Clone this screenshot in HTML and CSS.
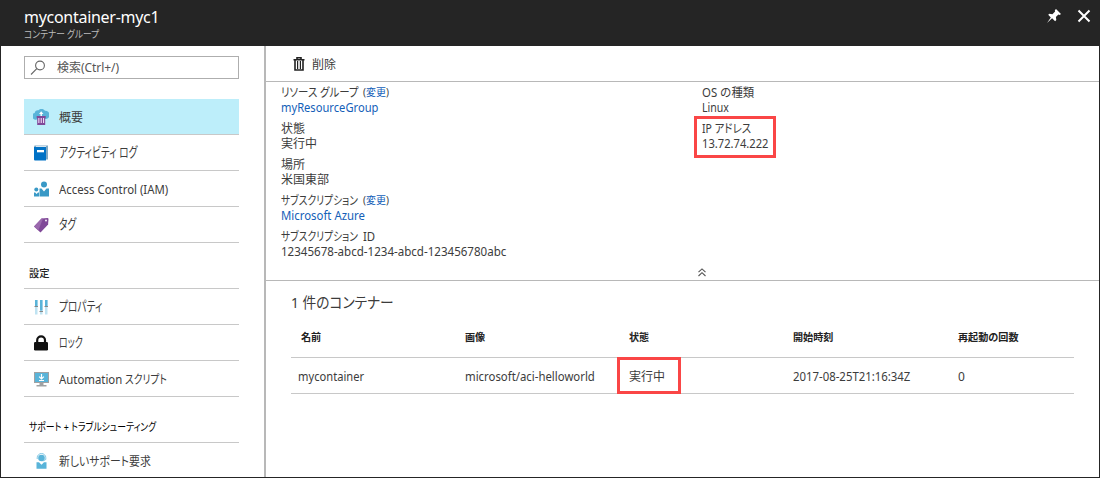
FILE: index.html
```html
<!DOCTYPE html>
<html lang="ja">
<head>
<meta charset="utf-8">
<title>mycontainer-myc1</title>
<link rel="stylesheet" href="styles.css">
</head>
<body>
<div class="blade">
  <header class="header">
    <div class="heading">
      <h1 class="title">mycontainer-myc1</h1>
      <div class="subtitle"><span class="kana-mid">コンテナー グループ</span></div>
    </div>
    <div class="actions">
      <svg class="pin" width="16" height="16" viewBox="0 0 16 16"><path fill="#fff" d="M10 1l5 5-1.400 1-1.200-.4-2.500 2.500.4 3-1.200 1.200-3-3L1 15l3.800-5.500-2.600-2.700 1.200-1 3 .4L9.100 3.600 8.800 2.200z"/></svg>
      <svg class="close" width="14" height="14" viewBox="0 0 14 14"><path stroke="#fff" stroke-width="2" d="M1.500 1.500l11 11M12.500 1.500l-11 11"/></svg>
    </div>
  </header>
  <div class="body">
    <nav class="menu">
      <div class="search">
        <svg width="16" height="16" viewBox="0 0 16 16" fill="none" stroke="#666" stroke-width="1.100"><circle cx="10" cy="5.500" r="4.400"/><path d="M6.800 8.700L1 14.500"/></svg>
        <span class="search-text">検索(Ctrl+/)</span>
      </div>
      <ul class="list list-first">
        <li class="item active">
          <svg width="16" height="16" viewBox="0 0 16 16"><path fill="#59b4d9" d="M3.500 10.500A3.300 3.300 0 0 1 1.700 4 3 3 0 0 1 5.500 1.300 4 4 0 0 1 12 1.800a3.500 3.500 0 0 1 1 8.200z"/><path fill="#fff" d="M7.500 7V5H6l2.200-2.800L10.400 5H8.900v2z"/><path fill="#804998" d="M3.700 7h9v2h-.5v7H4.200V9h-.5z"/><path fill="#f0d9f5" d="M5.300 9h1.100v5H5.300zM7.700 9h1.100v5H7.700zM10 9h1.100v5H10z"/></svg>
          <span>概要</span>
        </li>
        <li class="item">
          <svg width="16" height="16" viewBox="0 0 16 16"><path fill="#7fa8c4" d="M1.500.5H15v14h-2V2H1z"/><path fill="#fff" d="M3 1.300h10V2H3z"/><path fill="#0072c6" d="M1 2h12v13.500H2A1 1 0 0 1 1 14.500z"/><path fill="#fff" d="M4 5h7v2.300H4z"/></svg>
          <span class="kana">アクティビティ ログ</span>
        </li>
        <li class="item">
          <svg width="16" height="16" viewBox="0 0 16 16" fill="#3999c6"><circle cx="11" cy="3.500" r="3"/><circle cx="3.300" cy="8.500" r="2"/><path d="M6.500 7.500h2l2.500 3 2.500-3H16V15.500H6.500zM1 11.500h1.200l1.300 1.500L5 11.500h1v4H1z"/></svg>
          <span class="latin">Access Control (IAM)</span>
        </li>
        <li class="item">
          <svg width="16" height="16" viewBox="0 0 16 16"><path fill="#804998" d="M1 9.500L8.500 1.500 14.500 1q1 0 1 1l-.4 5.500L7.500 15.500z"/><path fill="#9a68ad" d="M1 9.500L8.500 1.500 10 1.400 5.300 13.400z"/><circle cx="13" cy="3.500" r=".9" fill="#fff"/></svg>
          <span class="kana">タグ</span>
        </li>
      </ul>
      <h2 class="section">設定</h2>
      <ul class="list">
        <li class="item">
          <svg width="16" height="16" viewBox="0 0 16 16"><path fill="#bfe3f2" d="M2 1h2.500v14.500H2zM7 1h2.500v14.500H7zM12 1h2.500v14.500H12z"/><path fill="#59b4d9" d="M2 1h2.500v6H2zM7 1h2.500v10.500H7zM12 1h2.500v6H12z"/><path fill="#888" d="M1.500 7h3.500v1H1.500zM6.500 12h3.500v1H6.500zM11.500 7h3.500v1h-3.500z"/></svg>
          <span class="kana">プロパティ</span>
        </li>
        <li class="item">
          <svg width="16" height="16" viewBox="0 0 16 16"><path fill="none" stroke="#111" stroke-width="2.200" d="M4.200 8V5.200a3.900 3.900 0 0 1 7.800 0V8"/><rect x="1" y="7" width="14" height="8.500" rx="1.200" fill="#111"/></svg>
          <span class="kana-tight">ロック</span>
        </li>
        <li class="item">
          <svg width="16" height="16" viewBox="0 0 16 16"><path fill="#a0a1a2" d="M1 1h15v11H1zM6.500 12h4v2h-4zM3.500 14h10v1.500h-10z"/><path fill="#59b4d9" d="M2 2h13v9H2z"/><path stroke="#fff" stroke-width="1.200" fill="none" d="M8.500 3v5M6.100 5.600l2.400 2.300 2.400-2.300M6 9.500h5"/></svg>
          <span class="automation"><span class="latin">Automation</span><span class="kana">スクリプト</span></span>
        </li>
      </ul>
      <h2 class="section section-support"><span>サポート + トラブルシューティング</span></h2>
      <ul class="list">
        <li class="item item-last">
          <svg width="16" height="16" viewBox="0 0 16 16"><circle cx="8.500" cy="5" r="3.300" fill="#59b4d9"/><path fill="none" stroke="#7fc6e3" d="M4.200 6V4.800a4.300 4.300 0 0 1 8.600 0V6.500L9.800 8"/><path fill="#59b4d9" d="M3.500 9.300H6l2.500 2.500L11 9.300h2.500V15.800h-10z"/></svg>
          <span class="kana-wide">新しいサポート要求</span>
        </li>
      </ul>
    </nav>
    <main class="main">
      <div class="toolbar">
        <svg width="12" height="14" viewBox="0 0 12 14"><path fill="none" stroke="#222" stroke-width="1.600" d="M4 2V.8h4V2M.5 2.700h11M2 3.500v9.500h8V3.500"/><path stroke="#222" stroke-width="1.200" d="M4.600 4v8M7.400 4v8"/></svg>
        <span>削除</span>
      </div>
      <section class="essentials">
        <dl class="props">
          <div class="prop"><dt class="pair"><span class="kana-mid">リソース グループ</span><span class="change">(<a>変更</a>)</span></dt><dd><a class="latin-tight">myResourceGroup</a></dd></div>
          <div class="prop"><dt>状態</dt><dd>実行中</dd></div>
          <div class="prop"><dt>場所</dt><dd>米国東部</dd></div>
          <div class="prop"><dt class="pair"><span class="kana">サブスクリプション</span><span class="change">(<a>変更</a>)</span></dt><dd><a class="latin">Microsoft Azure</a></dd></div>
          <div class="prop"><dt class="pair"><span class="kana">サブスクリプション</span><span class="latin">ID</span></dt><dd><span class="guid">12345678-abcd-1234-abcd-123456780abc</span></dd></div>
        </dl>
        <dl class="props">
          <div class="prop"><dt><span class="latin">OS の種類</span></dt><dd><span class="linux">Linux</span></dd></div>
          <div class="prop marked"><dt><span class="kana-mid">IP アドレス</span></dt><dd><span class="latin-tight">13.72.74.222</span></dd></div>
        </dl>
        <svg class="collapse" width="8" height="9" viewBox="0 0 8 9" fill="none" stroke="#555" stroke-width="1.100"><path d="M.5 4.200L4 .9l3.500 3.300M.5 8L4 4.700 7.500 8"/></svg>
      </section>
      <section class="containers">
        <h2 class="count"><span>1 件のコンテナー</span></h2>
        <div class="row head"><span class="name">名前</span><span>画像</span><span>状態</span><span>開始時刻</span><span>再起動の回数</span></div>
        <div class="row"><span class="latin-tight">mycontainer</span><span class="latin">microsoft/aci-helloworld</span><span class="state">実行中</span><span class="latin">2017-08-25T21:16:34Z</span><span>0</span></div>
      </section>
    </main>
  </div>
</div>
</body>
</html>
```

FILE: styles.css
```css
* { box-sizing: border-box; }
body, h1, h2, ul, dl, dd { margin: 0; padding: 0; }
body {
  font: 12px/15px "Noto Sans", "Noto Sans CJK JP", sans-serif;
  color: #3c3c3c;
  white-space: nowrap;
}
.blade {
  display: flex;
  flex-direction: column;
  width: 1100px;
  height: 478px;
  overflow: hidden;
  background: #fff;
  border: solid #252525;
  border-width: 0 1px 1px;
}

/* Condensed text runs */
.kana, .kana-mid, .kana-tight, .kana-wide, .latin, .latin-tight, .guid, .linux,
.section-support span, .count span {
  display: inline-block;
  transform-origin: 0 50%;
}
.kana, .kana-mid, .kana-tight, .kana-wide { font-feature-settings: "palt"; }
.kana { transform: scaleX(.81); }
.kana-mid { transform: scaleX(.87); }
.kana-tight { transform: scale(.75, 1.1); }
.kana-wide { transform: scaleX(.905); }
.latin { transform: scaleX(.948); }
.latin-tight { transform: scaleX(.93); }
.guid { transform: scaleX(.963); }
.linux { transform: scaleX(.88); }

.header {
  display: flex;
  justify-content: space-between;
  flex: none;
  height: 46px;
  padding: 6px 8px 0 23px;
  background: #252525;
}
.title { font-size: 16px; line-height: 22px; font-weight: 400; color: #fff; letter-spacing: -0.28px; }
.subtitle { font-size: 10px; line-height: 12px; color: #bbb; }
.actions { display: flex; gap: 15px; padding-top: 2px; }
.close { margin-top: 1px; }
.body { display: flex; flex: 1; min-height: 0; }
.menu { flex: none; width: 265px; padding: 10px 26px 0 23px; border-right: 2px solid #b8b8b8; }
.search {
  display: flex;
  align-items: center;
  gap: 11px;
  width: 215px;
  height: 23px;
  padding-left: 5px;
  border: 1px solid #aeaeae;
}
.search-text { color: #555; letter-spacing: -0.05px; }
.list { list-style: none; width: 215px; border-top: 1px solid #c8c8c8; }
.list-first { margin-top: 20px; border-top: 0; }
.item {
  display: flex;
  align-items: center;
  gap: 10px;
  height: 36px;
  padding-left: 9px;
  border-bottom: 1px solid #c8c8c8;
}
.item > span { padding-top: 2px; }
.item > .kana { transform: scale(.81, 1.1); }
.item > .kana, .item > .kana-tight { padding-top: 0; }
.item-last { border: 0; }
.item-last > span { padding-top: 0; }
.active { background: #bdeefa; }
.automation { display: grid; grid-template-columns: 66px auto; }
.section { height: 45px; padding: 23px 0 0 5px; font-size: 10.3px; line-height: 15px; font-weight: 500; color: #222; }
.section-support { font-weight: 400; color: #000; }
.section-support span { font-feature-settings: "palt"; transform: scale(.86, 1.06); }
.main { flex: 1; min-width: 0; display: flex; flex-direction: column; }
.toolbar { display: flex; align-items: center; gap: 7px; height: 36px; padding-left: 27px; border-bottom: 1px solid #b8b8b8; }
.toolbar span { padding-top: 2px; }
.essentials {
  position: relative;
  display: grid;
  grid-template-columns: 421px 1fr;
  height: 199px;
  padding: 3px 0 0 15px;
  border-bottom: 1px solid #b8b8b8;
}
.prop { margin-bottom: 6px; }
.prop dt, .prop dd { height: 15px; }
.prop a { color: #1460b8; }
.pair { display: grid; grid-template-columns: 82px auto; }
.change { font-size: 10px; }
.marked { width: 82px; height: 42px; margin: -5px 0 0 -8px; padding: 2px 0 0 5px; border: 3px solid #fa4646; }
.collapse { position: absolute; left: 432px; bottom: 3px; }
.containers { padding: 11px 25px 0; }
.count { height: 21px; font-size: 15px; line-height: 20px; font-weight: 400; font-feature-settings: "palt"; }
.count span { transform: scaleX(.915); }
.row {
  display: grid;
  grid-template-columns: 167px 164px 164px 165px 1fr;
  align-items: center;
  height: 36px;
  padding-left: 7px;
  border-bottom: 1px solid #c8c8c8;
}
.head { height: 45px; padding-top: 5px; font-size: 10.1px; font-weight: 600; color: #222; }
.name { padding-left: 3px; }
.state { width: 64px; height: 37px; margin: -1px 0 0 -12px; padding: 9px 0 0 9px; border: 3px solid #fa4646; }
```
